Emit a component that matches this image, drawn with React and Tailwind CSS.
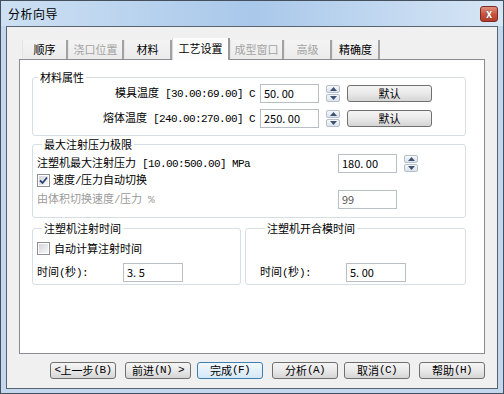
import React from "react";

const M = ({ children }) => (
  <span className="font-['Liberation_Mono',monospace] text-[11px] tracking-[-0.6px]">{children}</span>
);

const Tri = ({ down }) => (
  <svg width="7" height="4" viewBox="0 0 7 4">
    <path d={down ? "M0 0H7L3.5 4Z" : "M0 4H7L3.5 0Z"} fill="#3d5273" />
  </svg>
);

function Spin({ className }) {
  return (
    <div className={className}>
      <div className="flex flex-col gap-[1px] w-[14px]">
        <div className="h-[8px] flex items-center justify-center border border-[#b6bfcc] rounded-[2px] bg-linear-to-b from-[#f6f8fa] to-[#dce3ec]">
          <Tri />
        </div>
        <div className="h-[8px] flex items-center justify-center border border-[#b6bfcc] rounded-[2px] bg-linear-to-b from-[#f6f8fa] to-[#dce3ec]">
          <Tri down />
        </div>
      </div>
    </div>
  );
}

function Input({ value, className }) {
  return (
    <div className={className}>
      <div className="h-[19px] w-full border border-[#b9bdc4] bg-white pl-[3px] flex items-center text-[11px] leading-none">
        {value}
      </div>
    </div>
  );
}

function Btn({ children, focused, className, wide }) {
  const w = wide ? "w-[85px]" : "w-[66px]";
  return (
    <div className={className}>
      {focused ? (
        <div className={`${w} h-[17px] rounded-[3px] border border-[#3c7fb1] bg-linear-to-b from-[#f1f8fd] to-[#d5e8f7] flex items-center justify-center text-[11px] leading-none text-black`}>
          {children}
        </div>
      ) : (
        <div className={`${w} h-[17px] rounded-[3px] border border-[#707070] bg-linear-to-b from-[#f5f5f5] via-[#e9e9e9] to-[#d5d5d5] flex items-center justify-center text-[11px] leading-none text-black`}>
          {children}
        </div>
      )}
    </div>
  );
}

function Check({ checked }) {
  return (
    <div className="w-[13px] h-[13px] border border-[#8f8f8f] bg-white p-[1px] shrink-0">
      <div className="w-full h-full bg-linear-to-br from-[#d2d6dc] to-[#f7f7f7] flex items-center justify-center">
        {checked && (
          <svg width="9" height="9" viewBox="0 0 9 9">
            <path d="M1 4.5L3.5 7L8 1.5" fill="none" stroke="#2c4678" strokeWidth="1.8" />
          </svg>
        )}
      </div>
    </div>
  );
}

function Group({ title, className, children }) {
  return (
    <fieldset className={className}>
      <legend className="ml-[5px] px-[2px] text-[11px] leading-[12px] text-black">{title}</legend>
      {children}
    </fieldset>
  );
}

const tabs = [
  { t: "顺序", w: "w-[46px]", d: false },
  { t: "浇口位置", w: "w-[56px]", d: true },
  { t: "材料", w: "w-[48px]", d: false },
  { t: "工艺设置", w: "w-[58px]", d: false, sel: true },
  { t: "成型窗口", w: "w-[54px]", d: true },
  { t: "高级", w: "w-[48px]", d: true },
  { t: "精确度", w: "w-[48px]", d: false },
];

export default function App() {
  return (
    <div className="w-[504px] h-[394px] border border-[#44505e] bg-[#c3d8ef] flex flex-col font-['Noto_Sans_CJK_SC','Noto_Sans',sans-serif] text-black overflow-hidden">
      {/* title bar */}
      <div className="h-[25px] shrink-0 flex items-center pl-[7px] pr-[5px] bg-linear-to-r from-[#cde0f3] via-[#a9c8ea] to-[#d7e6f5]">
        <span className="text-[12px] tracking-[0.5px] leading-none text-black">分析向导</span>
        <div className="ml-auto w-[18px] h-[16px] rounded-[3px] border border-[#7d2b22] bg-linear-to-b from-[#e0907e] via-[#c9533f] to-[#b23c2a] flex items-center justify-center">
          <span className="text-white text-[11px] font-bold leading-none [text-shadow:0_0_1px_#333]">x</span>
        </div>
      </div>

      {/* client */}
      <div className="flex-1 mx-[5px] mb-[4px] border border-[#5a6470] bg-[#f0f0f0] flex flex-col pt-[11px] pl-[12px]">
        {/* tab strip */}
        <div className="h-[21px] flex items-end pl-[3px] relative z-10">
          {tabs.map((tb) =>
            tb.sel ? (
              <div
                key={tb.t}
                className={`${tb.w} h-[22px] -mb-[1px] bg-[#fcfcfc] border-l border-l-[#d8d8d8] border-r-2 border-r-[#9a9a9a] flex items-center justify-center text-[11px] leading-none pb-[1px]`}
              >
                {tb.t}
              </div>
            ) : (
              <div
                key={tb.t}
                className={`${tb.w} h-[19px] bg-linear-to-b from-[#f4f4f4] to-[#ebebeb] border-l border-l-[#e4e4e4] border-r-2 border-r-[#a2a2a2] flex items-center justify-center text-[11px] leading-none ${tb.d ? "text-[#a3a3a3]" : "text-black"}`}
              >
                {tb.t}
              </div>
            )
          )}
        </div>

        {/* tab panel */}
        <div className="w-[466px] h-[295px] border border-[#898c95] bg-white pl-[12px] pt-[11px] flex flex-col">
          {/* group 1 */}
          <Group title="材料属性" className="w-[434px] border border-[#d5dfe5] rounded-[3px] pt-[1px] pb-[7px] pr-[33px] flex flex-col gap-[6px]">
            <div className="flex items-center h-[19px]">
              <div className="flex-1 text-right pr-[5px] text-[11px] leading-none whitespace-nowrap">
                模具温度<M> [30.00:69.00] C</M>
              </div>
              <Input value="50. 00" className="w-[59px]" />
              <Spin className="ml-[7px]" />
              <Btn className="ml-[7px]" wide>默认</Btn>
            </div>
            <div className="flex items-center h-[19px]">
              <div className="flex-1 text-right pr-[5px] text-[11px] leading-none whitespace-nowrap">
                熔体温度<M> [240.00:270.00] C</M>
              </div>
              <Input value="250. 00" className="w-[59px]" />
              <Spin className="ml-[7px]" />
              <Btn className="ml-[7px]" wide>默认</Btn>
            </div>
          </Group>

          {/* group 2 */}
          <Group title="最大注射压力极限" className="mt-[2px] w-[434px] border border-[#d5dfe5] rounded-[3px] pt-[4px] pb-[8px] pl-[4px] pr-[47px] flex flex-col">
            <div className="flex items-center h-[19px]">
              <div className="flex-1 text-[11px] leading-none whitespace-nowrap">
                注塑机最大注射压力<M> [10.00:500.00] MPa</M>
              </div>
              <Input value="180. 00" className="w-[59px]" />
              <Spin className="ml-[7px]" />
            </div>
            <div className="mt-[1px] flex items-center h-[13px]">
              <Check checked />
              <span className="ml-[3px] text-[11px] leading-none">
                速度<M>/</M>压力自动切换
              </span>
            </div>
            <div className="mt-[3px] flex items-center h-[19px]">
              <div className="flex-1 text-[11px] leading-none text-[#9b9b9b]">
                由体积切换速度<M>/</M>压力<M> %</M>
              </div>
              <Input value="99" className="w-[59px] text-[#555]" />
              <div className="ml-[7px] w-[14px]" />
            </div>
          </Group>

          {/* groups 3 & 4 */}
          <div className="mt-[4px] flex">
            <Group title="注塑机注射时间" className="w-[209px] border border-[#d5dfe5] rounded-[3px] pl-[4px] pb-[2px] flex flex-col">
              <div className="mt-[8px] flex items-center h-[13px]">
                <Check />
                <span className="ml-[4px] text-[11px] leading-none">自动计算注射时间</span>
              </div>
              <div className="mt-[8px] flex items-center h-[19px]">
                <div className="w-[86px] text-[11px] leading-none">
                  时间<M>(</M>秒<M>):</M>
                </div>
                <Input value="3. 5" className="w-[60px]" />
              </div>
            </Group>
            <Group title="注塑机开合模时间" className="ml-[4px] w-[221px] border border-[#d5dfe5] rounded-[3px] pl-[14px] pb-[2px] flex flex-col">
              <div className="mt-[8px] h-[13px]" />
              <div className="mt-[8px] flex items-center h-[19px]">
                <div className="w-[86px] text-[11px] leading-none">
                  时间<M>(</M>秒<M>):</M>
                </div>
                <Input value="5. 00" className="w-[60px]" />
              </div>
            </Group>
          </div>
        </div>

        {/* buttons */}
        <div className="mt-[8px] flex pl-[31px]">
          <Btn>
            <M>&lt;</M>上一步<M>(B)</M>
          </Btn>
          <Btn className="ml-[9px]">
            前进<M>(N) &gt;</M>
          </Btn>
          <Btn className="ml-[6px]" focused>
            完成<M>(F)</M>
          </Btn>
          <Btn className="ml-[9px]">
            分析<M>(A)</M>
          </Btn>
          <Btn className="ml-[6px]">
            取消<M>(C)</M>
          </Btn>
          <Btn className="ml-[9px]">
            帮助<M>(H)</M>
          </Btn>
        </div>
      </div>
    </div>
  );
}
